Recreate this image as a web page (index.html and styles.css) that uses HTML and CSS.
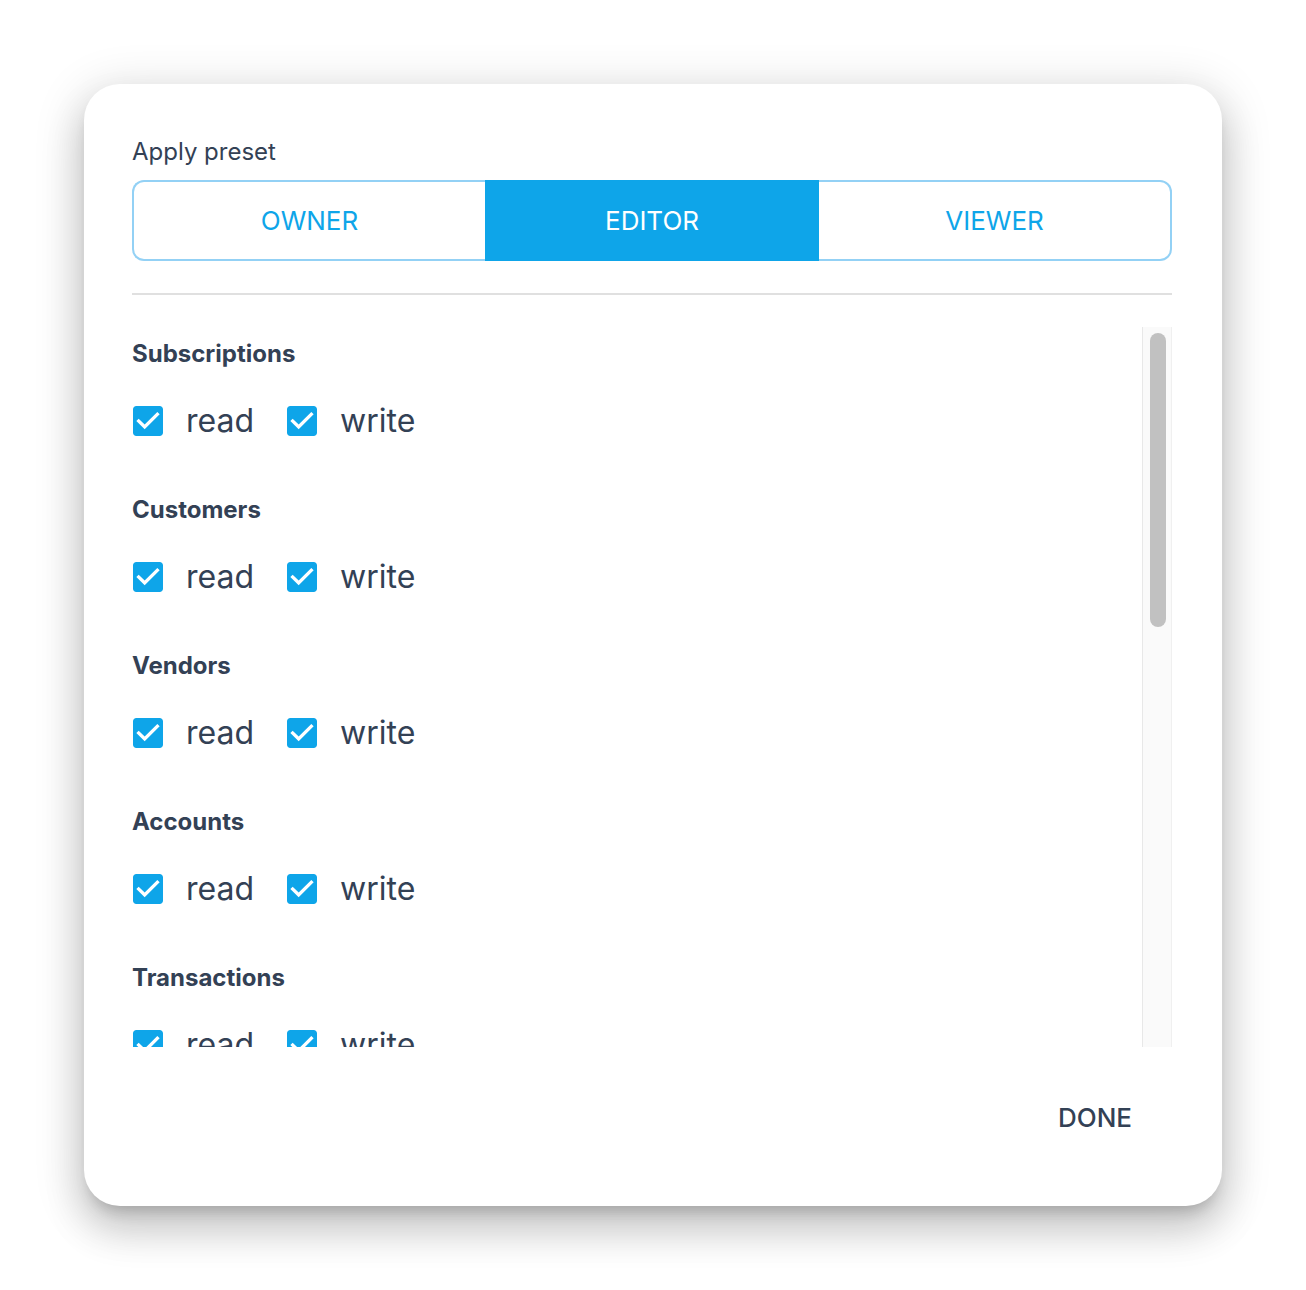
FILE: index.html
```html
<!DOCTYPE html>
<html lang="en">
<head>
<meta charset="utf-8">
<title>Apply preset</title>
<link rel="stylesheet" href="styles.css">
</head>
<body>
<div class="dialog">
  <div class="label">Apply preset</div>
  <div class="segmented">
    <button class="seg seg-first">OWNER</button>
    <button class="seg seg-active">EDITOR</button>
    <button class="seg seg-last">VIEWER</button>
  </div>
  <hr class="divider">
  <div class="scroll-wrap">
    <div class="scroll">
      <section class="group">
        <h3 class="group-title">Subscriptions</h3>
        <div class="row">
          <label class="cb"><svg class="cb-icon" viewBox="0 0 24 24"><path d="M19 3H5c-1.11 0-2 .9-2 2v14c0 1.1.89 2 2 2h14c1.11 0 2-.9 2-2V5c0-1.1-.89-2-2-2zm-9 14l-5-5 1.41-1.41L10 14.17l7.59-7.59L19 8l-9 9z"/></svg><span>read</span></label>
          <label class="cb"><svg class="cb-icon" viewBox="0 0 24 24"><path d="M19 3H5c-1.11 0-2 .9-2 2v14c0 1.1.89 2 2 2h14c1.11 0 2-.9 2-2V5c0-1.1-.89-2-2-2zm-9 14l-5-5 1.41-1.41L10 14.17l7.59-7.59L19 8l-9 9z"/></svg><span>write</span></label>
        </div>
      </section>
      <section class="group">
        <h3 class="group-title">Customers</h3>
        <div class="row">
          <label class="cb"><svg class="cb-icon" viewBox="0 0 24 24"><path d="M19 3H5c-1.11 0-2 .9-2 2v14c0 1.1.89 2 2 2h14c1.11 0 2-.9 2-2V5c0-1.1-.89-2-2-2zm-9 14l-5-5 1.41-1.41L10 14.17l7.59-7.59L19 8l-9 9z"/></svg><span>read</span></label>
          <label class="cb"><svg class="cb-icon" viewBox="0 0 24 24"><path d="M19 3H5c-1.11 0-2 .9-2 2v14c0 1.1.89 2 2 2h14c1.11 0 2-.9 2-2V5c0-1.1-.89-2-2-2zm-9 14l-5-5 1.41-1.41L10 14.17l7.59-7.59L19 8l-9 9z"/></svg><span>write</span></label>
        </div>
      </section>
      <section class="group">
        <h3 class="group-title">Vendors</h3>
        <div class="row">
          <label class="cb"><svg class="cb-icon" viewBox="0 0 24 24"><path d="M19 3H5c-1.11 0-2 .9-2 2v14c0 1.1.89 2 2 2h14c1.11 0 2-.9 2-2V5c0-1.1-.89-2-2-2zm-9 14l-5-5 1.41-1.41L10 14.17l7.59-7.59L19 8l-9 9z"/></svg><span>read</span></label>
          <label class="cb"><svg class="cb-icon" viewBox="0 0 24 24"><path d="M19 3H5c-1.11 0-2 .9-2 2v14c0 1.1.89 2 2 2h14c1.11 0 2-.9 2-2V5c0-1.1-.89-2-2-2zm-9 14l-5-5 1.41-1.41L10 14.17l7.59-7.59L19 8l-9 9z"/></svg><span>write</span></label>
        </div>
      </section>
      <section class="group">
        <h3 class="group-title">Accounts</h3>
        <div class="row">
          <label class="cb"><svg class="cb-icon" viewBox="0 0 24 24"><path d="M19 3H5c-1.11 0-2 .9-2 2v14c0 1.1.89 2 2 2h14c1.11 0 2-.9 2-2V5c0-1.1-.89-2-2-2zm-9 14l-5-5 1.41-1.41L10 14.17l7.59-7.59L19 8l-9 9z"/></svg><span>read</span></label>
          <label class="cb"><svg class="cb-icon" viewBox="0 0 24 24"><path d="M19 3H5c-1.11 0-2 .9-2 2v14c0 1.1.89 2 2 2h14c1.11 0 2-.9 2-2V5c0-1.1-.89-2-2-2zm-9 14l-5-5 1.41-1.41L10 14.17l7.59-7.59L19 8l-9 9z"/></svg><span>write</span></label>
        </div>
      </section>
      <section class="group">
        <h3 class="group-title">Transactions</h3>
        <div class="row">
          <label class="cb"><svg class="cb-icon" viewBox="0 0 24 24"><path d="M19 3H5c-1.11 0-2 .9-2 2v14c0 1.1.89 2 2 2h14c1.11 0 2-.9 2-2V5c0-1.1-.89-2-2-2zm-9 14l-5-5 1.41-1.41L10 14.17l7.59-7.59L19 8l-9 9z"/></svg><span>read</span></label>
          <label class="cb"><svg class="cb-icon" viewBox="0 0 24 24"><path d="M19 3H5c-1.11 0-2 .9-2 2v14c0 1.1.89 2 2 2h14c1.11 0 2-.9 2-2V5c0-1.1-.89-2-2-2zm-9 14l-5-5 1.41-1.41L10 14.17l7.59-7.59L19 8l-9 9z"/></svg><span>write</span></label>
        </div>
      </section>
    </div>
    <div class="scrollbar" aria-hidden="true">
      <div class="thumb"></div>
    </div>
  </div>
  <div class="footer">
    <button class="done">DONE</button>
  </div>
</div>
</body>
</html>
```

FILE: styles.css
```css
* { box-sizing: border-box; }

html, body {
  margin: 0;
  background: #ffffff;
}

body {
  padding: 84px;
  font-family: Inter, "Noto Sans", sans-serif;
  color: #334155;
}

.dialog {
  width: 1138px;
  height: 1122px;
  background: #ffffff;
  border-radius: 36px;
  padding: 48px 50px 0 48px;
  display: flex;
  flex-direction: column;
  box-shadow:
    0 11px 15px -7px rgba(0, 0, 0, 0.2),
    0 24px 38px 3px rgba(0, 0, 0, 0.14),
    0 9px 46px 8px rgba(0, 0, 0, 0.12);
}

.label {
  font-size: 24px;
  line-height: 40px;
  margin-bottom: 8px;
  color: #334155;
}

.segmented {
  display: grid;
  grid-template-columns: 353fr 334fr 353fr;
  height: 81px;
}

.seg {
  font-family: Inter, "Noto Sans", sans-serif;
  font-size: 26px;
  background: #ffffff;
  color: #0ea5e9;
  border: 2px solid #93d1f5;
  padding: 0;
  margin: 0;
  cursor: pointer;
}

.seg-first {
  border-right: none;
  border-radius: 12px 0 0 12px;
}

.seg-last {
  border-left: none;
  border-radius: 0 12px 12px 0;
}

.seg-active {
  background: #0ea5e9;
  color: #ffffff;
  border: none;
}

.divider {
  border: none;
  height: 2px;
  background: #e0e0e0;
  margin: 32px 0 32px 0;
}

.scroll-wrap {
  display: flex;
  height: 720px;
}

.scroll {
  flex: 1;
  overflow: hidden;
  padding-top: 12px;
}

.scrollbar {
  width: 30px;
  flex: none;
  background: #fafafa;
  border-left: 1px solid #e8e8e8;
  border-right: 1px solid #f0f0f0;
  padding: 6px 5px 0 7px;
}

.thumb {
  height: 294px;
  background: #c1c1c1;
  border-radius: 8px;
}

.group {
  margin-bottom: 50px;
}

.group-title {
  margin: 0 0 28px 0;
  font-size: 24px;
  line-height: 30px;
  font-weight: 700;
  color: #334155;
}

.row {
  display: flex;
  gap: 28px;
  height: 48px;
  align-items: center;
}

.cb {
  display: flex;
  align-items: center;
  gap: 18px;
  font-size: 32px;
  line-height: 48px;
  color: #334155;
}

.row .cb:first-child {
  margin-left: -4px;
}

.cb-icon {
  width: 40px;
  height: 40px;
  fill: #0ea5e9;
  flex: none;
}

.footer {
  flex: 1;
  display: flex;
  justify-content: flex-end;
  align-items: flex-start;
  padding-top: 47px;
  padding-right: 24px;
}

.done {
  font-family: Inter, "Noto Sans", sans-serif;
  font-size: 26px;
  font-weight: 500;
  line-height: 48px;
  color: #334155;
  background: transparent;
  border: none;
  padding: 0 16px;
}
```
